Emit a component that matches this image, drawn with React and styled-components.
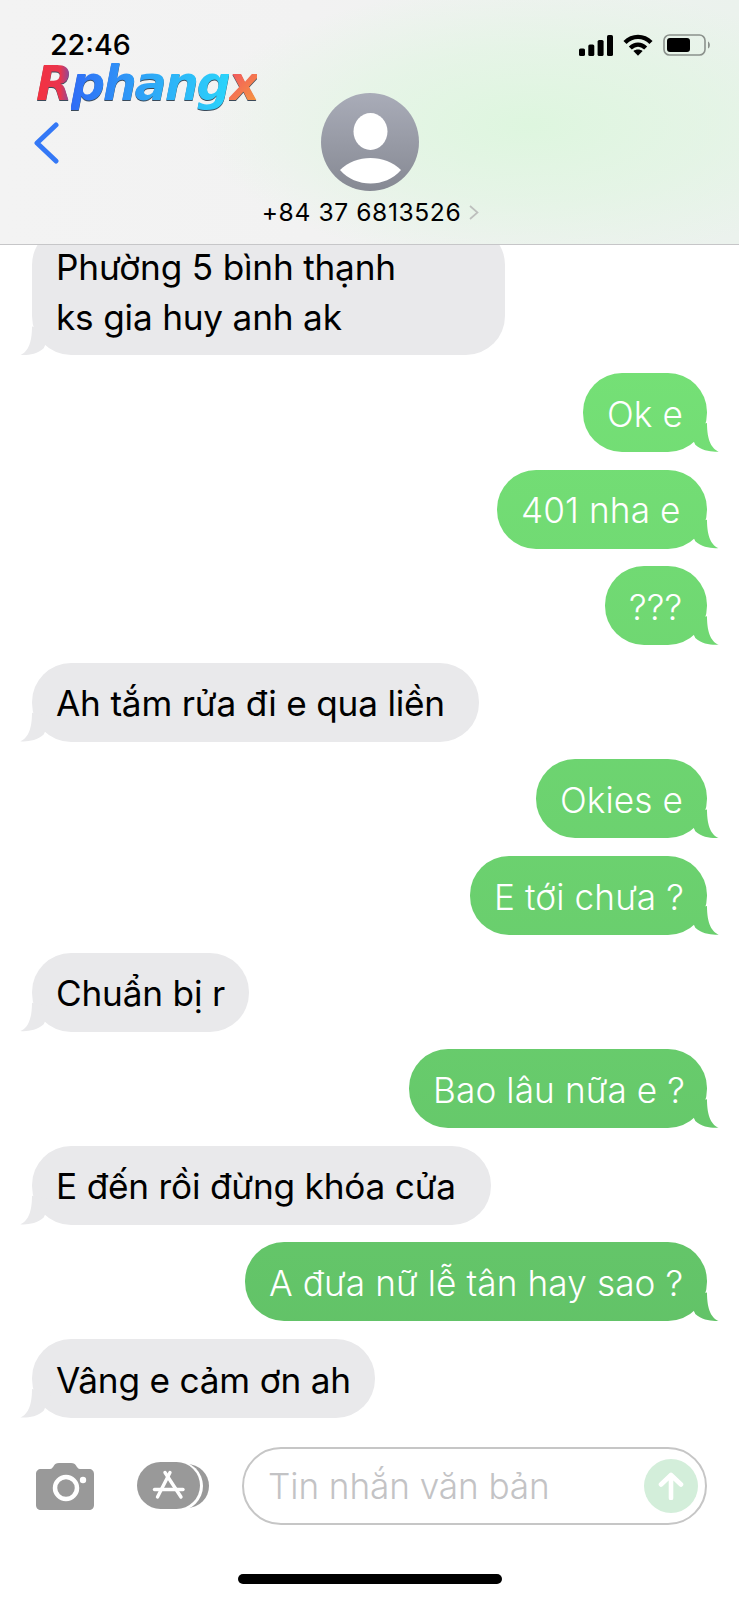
import React from "react";
import styled, { createGlobalStyle } from "styled-components";

const Global = createGlobalStyle`
  html, body { margin: 0; padding: 0; background: #fff; }
  * { box-sizing: border-box; }
`;
const Page = styled.div`
  width: 739px; height: 1600px; display: flex; flex-direction: column; overflow: hidden;
  background: #fff; font-family: Inter, "Noto Sans", sans-serif; color: #000;
`;
const Header = styled.header`
  position: relative; z-index: 1; height: 245px; flex: none; border-bottom: 1px solid #c6c6c8;
  background:
    radial-gradient(ellipse 330px 140px at 530px 125px, #def6df 0%, rgba(222,246,223,.55) 55%, rgba(222,246,223,0) 100%),
    linear-gradient(90deg, #f3f3f3 0%, #f2f2f2 42%, #ebf2ed 100%);
  display: flex; flex-direction: column;
`;
const StatusBar = styled.div`
  height: 22px; margin-top: 34px; padding: 0 28px 0 50px;
  display: flex; align-items: center; justify-content: space-between;
`;
const Time = styled.div`font-size: 28.6px; font-weight: 550; line-height: 20px;`;
const StatusIcons = styled.div`display: flex; align-items: center; gap: 10px;`;
const Logo = styled.div`
  position: absolute; left: 36px; top: 60px; font-family: "DejaVu Sans", sans-serif;
  font-size: 48px; font-weight: 700; font-style: italic; line-height: 46px; letter-spacing: -2.3px;
  filter: drop-shadow(0 1px 0 #3a4a5a); white-space: nowrap;
`;
const LogoPart = styled.span`
  background: ${p => p.$fill}; -webkit-background-clip: text; background-clip: text; color: transparent;
`;
const Nav = styled.div`
  margin-top: 37px; padding-left: 2px; display: grid; grid-template-columns: 1fr auto 1fr; align-items: start;
`;
const BackButton = styled.div`margin: 29px 0 0 31px; width: 26px; height: 42px;`;
const Contact = styled.div`display: flex; flex-direction: column; align-items: center;`;
const Avatar = styled.div`
  width: 98px; height: 98px; border-radius: 50%; overflow: hidden;
  background: linear-gradient(180deg, #a9acb8, #868993);
`;
const Number = styled.div`
  margin-top: 7px; display: flex; align-items: center; gap: 8px; font-size: 24.6px; line-height: 28px;
  white-space: nowrap; letter-spacing: .6px;
`;
const Thread = styled.main`
  flex: 1; min-height: 0; overflow: hidden; display: flex; flex-direction: column;
  justify-content: flex-end; gap: 17.6px; padding: 0 32px 29px;
`;
const tailPath = `path("M28 1 C28 19,33 27,39.7 29.4 C34 30.2,23 29,16.3 22.7 L8 5 Z")`;
const Bubble = styled.div`
  position: relative; flex: none; border-radius: 39px; padding: 15.5px 24px 13.5px;
  font-size: 35.2px; line-height: 50px; white-space: pre;
  letter-spacing: ${p => (p.$me ? ".1px" : "-.2px")};
  align-self: ${p => (p.$me ? "flex-end" : "flex-start")};
  color: ${p => (p.$me ? "#fff" : "#000")};
  background: ${p => (p.$me ? "linear-gradient(180deg, #76e277 300px, #60bf66 1450px) fixed" : "#e9e9eb")};
  font-weight: ${p => (p.$me ? 350 : 400)};
  &::before {
    content: ""; position: absolute; bottom: 0; width: 40px; height: 30px; background: inherit;
    clip-path: ${tailPath};
    ${p => (p.$me ? "right: -12px;" : "left: -12px; transform: scaleX(-1);")}
  }
`;
const BubbleText = styled.span`position: relative; z-index: 1;`;
const Footer = styled.footer`flex: none; display: flex; flex-direction: column; align-items: center; padding-bottom: 16px;`;
const Composer = styled.div`width: 100%; display: flex; align-items: center; padding: 0 32px 0 36px;`;
const CameraButton = styled.div`width: 58px; height: 47px; flex: none;`;
const AppsButton = styled.div`width: 72px; height: 48px; flex: none; margin-left: 43px;`;
const Field = styled.div`
  flex: 1; height: 78px; margin-left: 33px; border: 2px solid #c6c6c6; border-radius: 39px;
  display: flex; align-items: center; justify-content: space-between; padding: 0 7px 0 24px;
`;
const Placeholder = styled.span`font-size: 35.2px; font-weight: 300; color: #c3c3c5; letter-spacing: -.1px;`;
const Send = styled.div`width: 54px; height: 54px; border-radius: 50%; background: #d3eeda; display: flex; align-items: center; justify-content: center;`;
const HomeBar = styled.div`width: 264px; height: 10px; border-radius: 5px; background: #000; margin-top: 49px;`;

const messages = [
  { t: "Phường 5 bình thạnh\nks gia huy anh ak", w: 473 },
  { t: "Ok e", me: 1, w: 124 },
  { t: "401 nha e", me: 1, w: 210 },
  { t: "???", me: 1, w: 102 },
  { t: "Ah tắm rửa đi e qua liền", w: 447 },
  { t: "Okies e", me: 1, w: 171 },
  { t: "E tới chưa ?", me: 1, w: 237 },
  { t: "Chuẩn bị r", w: 217 },
  { t: "Bao lâu nữa e ?", me: 1, w: 298 },
  { t: "E đến rồi đừng khóa cửa", w: 459 },
  { t: "A đưa nữ lễ tân hay sao ?", me: 1, w: 462 },
  { t: "Vâng e cảm ơn ah", w: 343 },
];

const Signal = () => (
  <svg width="34" height="21" viewBox="0 0 34 21" fill="#000">
    <rect x="0" y="13.5" width="6" height="7.5" rx="1.6" />
    <rect x="9.3" y="9.5" width="6" height="11.5" rx="1.6" />
    <rect x="18.6" y="5" width="6" height="16" rx="1.6" />
    <rect x="28" y="0" width="6" height="21" rx="1.6" />
  </svg>
);
const Wifi = () => (
  <svg width="30" height="22" viewBox="0 0 30 22" fill="none" stroke="#000" strokeWidth="4.4">
    <path d="M2 8.5 C9.5 1 20.5 1 28 8.5" />
    <path d="M7.3 14 C12 9.7 18 9.7 22.7 14" />
    <path d="M15 21.8 L10.4 17 C13 15 17 15 19.6 17 Z" fill="#000" stroke="none" />
  </svg>
);
const Battery = () => (
  <svg width="48" height="22" viewBox="0 0 48 22">
    <rect x="1" y="1" width="41" height="20" rx="5.5" fill="none" stroke="#8b918c" strokeWidth="1.6" />
    <rect x="4" y="4" width="23" height="14" rx="3" fill="#000" />
    <path d="M45 7.5 C47.5 8.5 47.5 13.5 45 14.5 Z" fill="#8b918c" />
  </svg>
);
const Back = () => (
  <svg width="26" height="42" viewBox="0 0 26 42" fill="none" stroke="#3478f6" strokeWidth="5" strokeLinecap="round" strokeLinejoin="round">
    <path d="M23 3 L4 21 L23 39" />
  </svg>
);
const Person = () => (
  <svg width="98" height="98" viewBox="0 0 98 98" fill="#fff">
    <ellipse cx="49.5" cy="38.5" rx="17" ry="18.5" />
    <path d="M19 77 C27 69 38 65 49.5 65 C61 65 72 69 80 77 C72 86 61 90.5 49.5 90.5 C38 90.5 27 86 19 77 Z" />
  </svg>
);
const Chevron = () => (
  <svg width="10" height="15" viewBox="0 0 10 15" fill="none" stroke="#bdbfbd" strokeWidth="1.7">
    <path d="M1 1 L8.5 7.5 L1 14" />
  </svg>
);
const Camera = () => (
  <svg width="58" height="47" viewBox="0 0 58 47">
    <path d="M5 6 H14 C16 6 17 4 18 2.5 C19 1 20 0 23 0 H35 C38 0 39 1 40 2.5 C41 4 42 6 44 6 H53 C56 6 58 8 58 11 V42 C58 45 56 47 53 47 H5 C2 47 0 45 0 42 V11 C0 8 2 6 5 6 Z" fill="#999" />
    <circle cx="30" cy="25" r="11" fill="none" stroke="#fff" strokeWidth="4.5" />
    <circle cx="47" cy="17" r="3.2" fill="#fff" />
  </svg>
);
const Apps = () => (
  <svg width="72" height="48" viewBox="0 0 72 48">
    <rect x="12" y="2" width="60" height="44" rx="22" fill="#999" />
    <rect x="3" y="-1" width="63" height="50" rx="25" fill="#fff" />
    <rect x="0" y="0" width="63" height="47" rx="23.5" fill="#999" />
    <g stroke="#fff" strokeWidth="3.4" strokeLinecap="round" fill="none">
      <path d="M33 10.5 L20.5 35" />
      <path d="M28 10.5 L44 35" />
      <path d="M17.5 27.5 H46" />
    </g>
  </svg>
);
const Arrow = () => (
  <svg width="26" height="28" viewBox="0 0 26 28" fill="none" stroke="#fff" strokeWidth="4.6" strokeLinecap="round" strokeLinejoin="round">
    <path d="M13 26 V3 M3 12.5 L13 3 L23 12.5" />
  </svg>
);

export default function App() {
  return (
    <Page>
      <Global />
      <Header>
        <StatusBar>
          <Time>22:46</Time>
          <StatusIcons><Signal /><Wifi /><Battery /></StatusIcons>
        </StatusBar>
        <Logo>
          <LogoPart $fill="linear-gradient(90deg,#f5313f,#e8354f 70%,#7b4ea8)">R</LogoPart>
          <LogoPart $fill="linear-gradient(90deg,#2f6cf6,#2ea8f7 50%,#2bd4fb)">phang</LogoPart>
          <LogoPart $fill="linear-gradient(135deg,#f0406a,#f7a23a)">x</LogoPart>
        </Logo>
        <Nav>
          <BackButton><Back /></BackButton>
          <Contact>
            <Avatar><Person /></Avatar>
            <Number>+84 37 6813526<Chevron /></Number>
          </Contact>
        </Nav>
      </Header>
      <Thread>
        {messages.map(m => (
          <Bubble key={m.t} $me={m.me} style={{ width: m.w }}>
            <BubbleText>{m.t}</BubbleText>
          </Bubble>
        ))}
      </Thread>
      <Footer>
        <Composer>
          <CameraButton><Camera /></CameraButton>
          <AppsButton><Apps /></AppsButton>
          <Field>
            <Placeholder>Tin nhắn văn bản</Placeholder>
            <Send><Arrow /></Send>
          </Field>
        </Composer>
        <HomeBar />
      </Footer>
    </Page>
  );
}
